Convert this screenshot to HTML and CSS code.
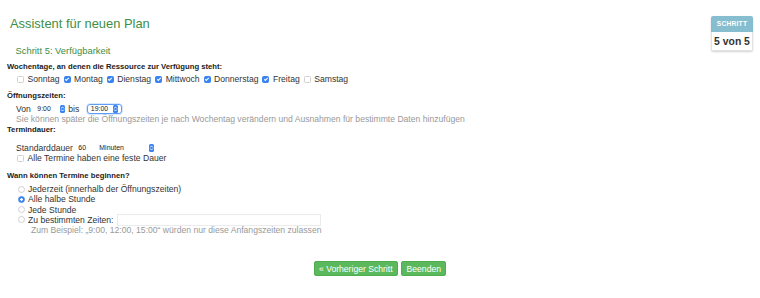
FILE: index.html
```html
<!DOCTYPE html>
<html lang="de">
<head>
    <meta charset="UTF-8">
    <meta name="viewport" content="width=device-width, initial-scale=1.0">
    <title>Assistent für neuen Plan</title>
    <link rel="stylesheet" href="styles.css">
</head>
<body>
    <div class="wizard">
        <div class="step-badge">
            <div class="step-badge-head">Schritt</div>
            <div class="step-badge-body">5 von 5</div>
        </div>

        <h1 class="title">Assistent für neuen Plan</h1>
        <h2 class="step">Schritt 5: Verfügbarkeit</h2>

        <div class="field field-days">
            <div class="field-label">Wochentage, an denen die Ressource zur Verfügung steht:</div>
            <div class="days">
                <label><input type="checkbox">Sonntag</label>
                <label><input type="checkbox" checked>Montag</label>
                <label><input type="checkbox" checked>Dienstag</label>
                <label><input type="checkbox" checked>Mittwoch</label>
                <label><input type="checkbox" checked>Donnerstag</label>
                <label><input type="checkbox" checked>Freitag</label>
                <label><input type="checkbox">Samstag</label>
            </div>
        </div>

        <div class="field field-hours">
            <div class="field-label">Öffnungszeiten:</div>
            <div class="row hours-row">
                <span>Von</span>
                <span class="select select-from">
                    <select><option>9:00</option></select>
                    <svg class="stepper" width="5" height="8" viewBox="0 0 10 16"><rect width="10" height="16" rx="3" fill="#3b84f0"/><path d="M2.6 6.4 5 4l2.4 2.4M2.6 9.6 5 12l2.4-2.4" stroke="#fff" stroke-width="1.7" fill="none" stroke-linecap="round" stroke-linejoin="round"/></svg>
                </span>
                <span class="bis">bis</span>
                <span class="select select-to focus">
                    <select><option>19:00</option></select>
                    <svg class="stepper" width="5" height="8" viewBox="0 0 10 16"><rect width="10" height="16" rx="3" fill="#3b84f0"/><path d="M2.6 6.4 5 4l2.4 2.4M2.6 9.6 5 12l2.4-2.4" stroke="#fff" stroke-width="1.7" fill="none" stroke-linecap="round" stroke-linejoin="round"/></svg>
                </span>
            </div>
            <div class="hint">Sie können später die Öffnungszeiten je nach Wochentag verändern und Ausnahmen für bestimmte Daten hinzufügen</div>
        </div>

        <div class="field field-duration">
            <div class="field-label">Termindauer:</div>
            <div class="row duration-row">
                <span>Standarddauer</span>
                <input class="num-input" type="text" value="60">
                <span class="select select-unit">
                    <select><option>Minuten</option></select>
                    <svg class="stepper" width="5" height="8" viewBox="0 0 10 16"><rect width="10" height="16" rx="3" fill="#3b84f0"/><path d="M2.6 6.4 5 4l2.4 2.4M2.6 9.6 5 12l2.4-2.4" stroke="#fff" stroke-width="1.7" fill="none" stroke-linecap="round" stroke-linejoin="round"/></svg>
                </span>
            </div>
            <label class="check-row"><input type="checkbox">Alle Termine haben eine feste Dauer</label>
        </div>

        <div class="field field-start">
            <div class="field-label">Wann können Termine beginnen?</div>
            <div class="radios">
                <label class="radio-row"><input type="radio" name="start">Jederzeit (innerhalb der Öffnungszeiten)</label>
                <label class="radio-row"><input type="radio" name="start" checked>Alle halbe Stunde</label>
                <label class="radio-row"><input type="radio" name="start">Jede Stunde</label>
                <label class="radio-row"><input type="radio" name="start">Zu bestimmten Zeiten:<input class="times-input" type="text"></label>
                <div class="hint hint-times">Zum Beispiel: „9:00, 12:00, 15:00“ würden nur diese Anfangszeiten zulassen</div>
            </div>
        </div>

        <div class="actions">
            <button class="btn">« Vorheriger Schritt</button>
            <button class="btn">Beenden</button>
        </div>
    </div>
</body>
</html>
```

FILE: styles.css
```css
body {
    margin: 0;
    font-family: "Liberation Sans", Arial, sans-serif;
    font-size: 8.6px;
    color: #333;
    background-color: #fff;
}

.wizard {
    display: flow-root;
    padding: 0 7px;
}

/* step counter in the corner */
.step-badge {
    float: right;
    margin-top: 16px;
    width: 42px;
    text-align: center;
    border-radius: 2px;
    overflow: hidden;
    box-shadow: 0 1px 2px rgba(0, 0, 0, 0.18);
}

.step-badge-head {
    height: 16px;
    line-height: 16px;
    background-color: #86bdcf;
    color: #fff;
    font-size: 6.7px;
    font-weight: bold;
    text-transform: uppercase;
    letter-spacing: 0.2px;
}

.step-badge-body {
    height: 18px;
    line-height: 19px;
    border: 1px solid #e2e2e2;
    border-top: none;
    font-size: 10.4px;
    font-weight: bold;
    color: #333;
}

.title {
    margin: 15.5px 0 0 3px;
    font-size: 12.9px;
    line-height: 16px;
    font-weight: normal;
    color: #3d8e46;
}

.step {
    margin: 13.7px 0 0 8.5px;
    font-size: 9.4px;
    line-height: 11px;
    font-weight: normal;
    color: #3d8e46;
}

.field-label {
    font-size: 7.7px;
    line-height: 10px;
    font-weight: bold;
    color: #222;
}

.field-days { margin-top: 6px; }
.field-hours { margin-top: 6px; }
.field-duration { margin-top: 1px; }
.field-start { margin-top: 8px; }

.days {
    display: flex;
    gap: 4px;
    margin-top: 1.5px;
    padding-left: 10px;
    height: 11px;
    line-height: 11px;
}

.days label,
.check-row,
.radio-row {
    display: flex;
    align-items: center;
}

.row {
    display: flex;
    align-items: center;
    height: 10px;
    line-height: 10px;
    padding-left: 9px;
}

.hours-row { margin-top: 3px; }
.duration-row { margin-top: 8px; }

.hint {
    padding-left: 9px;
    line-height: 10px;
    color: #999;
}

/* checkboxes and radios */
input[type="checkbox"],
input[type="radio"] {
    appearance: none;
    -webkit-appearance: none;
    position: relative;
    box-sizing: border-box;
    width: 7px;
    height: 7px;
    margin: 0 3.5px 0 0;
    border: 1px solid #d0d0d0;
    background-color: #fff;
    flex-shrink: 0;
}

input[type="checkbox"] {
    border-radius: 1.5px;
}

input[type="checkbox"]:checked {
    background-color: #3b84f0;
    border-color: #3b84f0;
}

input[type="checkbox"]:checked::after {
    content: "";
    position: absolute;
    left: 1.6px;
    top: 0.2px;
    width: 1.4px;
    height: 3px;
    border: solid #fff;
    border-width: 0 1.1px 1.1px 0;
    transform: rotate(45deg);
}

input[type="radio"] {
    border-radius: 50%;
}

input[type="radio"]:checked {
    border-color: #3b84f0;
    background: radial-gradient(circle, #fff 0 1.1px, #3b84f0 1.5px);
}

.check-row {
    margin-top: 0.5px;
    padding-left: 10px;
    height: 10px;
    line-height: 10px;
}

.radios {
    margin-top: 3px;
    padding-left: 11px;
}

.radio-row {
    height: 10.2px;
    line-height: 10.2px;
}

.radio-row input[type="radio"] {
    margin-right: 3px;
}

.hint-times {
    padding-left: 13px;
    line-height: 10.2px;
}

.times-input {
    box-sizing: border-box;
    width: 204px;
    height: 11.5px;
    margin: 0 0 0 3px;
    padding: 0;
    border: 1px solid #ebebeb;
    background-color: #fff;
}

/* selects with the blue stepper */
.select {
    display: inline-flex;
    align-items: center;
    box-sizing: border-box;
    height: 10px;
    border: 1px solid transparent;
    border-radius: 3px;
}

.select select {
    appearance: none;
    -webkit-appearance: none;
    height: 9px;
    margin: 0;
    padding: 0;
    border: none;
    background: transparent;
    font-family: "Liberation Sans", Arial, sans-serif;
    font-size: 6.9px;
    line-height: 9px;
    color: #222;
    outline: none;
}

.select-from {
    margin-left: 1.5px;
    padding: 0 1px 0 4px;
}

.select-from select { width: 23px; }

.bis { margin-left: 1px; }

.select-to {
    margin-left: 7.5px;
    padding: 0 3px 0 3px;
    border: 1.2px solid #5e9ef5;
    box-shadow: 0 0 0 0.6px rgba(94, 158, 245, 0.45);
}

.select-to select { width: 22.5px; }

.select-unit {
    margin-left: 1px;
    padding: 0 2px 0 5px;
}

.select-unit select { width: 50px; }

.stepper {
    display: block;
    flex-shrink: 0;
}

.num-input {
    box-sizing: border-box;
    width: 18px;
    height: 10px;
    margin: 0 0 0 1.5px;
    padding: 0 3px;
    border: 1px solid transparent;
    font-family: "Liberation Sans", Arial, sans-serif;
    font-size: 6.9px;
    color: #222;
    background: transparent;
}

.actions {
    display: flex;
    justify-content: center;
    gap: 3px;
    margin-top: 25.7px;
}

.btn {
    height: 15.5px;
    padding: 0 4.5px;
    font-family: "Liberation Sans", Arial, sans-serif;
    font-size: 8.6px;
    color: #fff;
    background-color: #5cb85c;
    border: 1px solid #4cae4c;
    border-radius: 2px;
    cursor: pointer;
}
```
